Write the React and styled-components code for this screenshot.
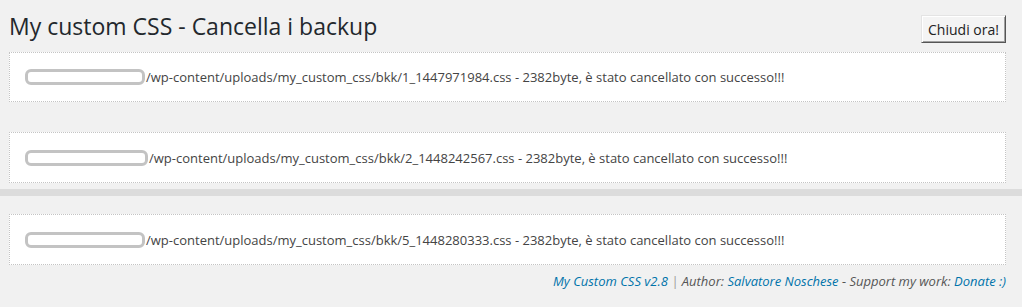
import React from "react";
import styled, { createGlobalStyle } from "styled-components";

const Global = createGlobalStyle`
  html, body { margin: 0; padding: 0; background: #f1f1f1; }
  body { font-family: "Open Sans", "Noto Sans", sans-serif; color: #444; font-size: 13px; }
`;

const Page = styled.div`
  width: 1022px;
  padding-top: 12px;
`;

const Header = styled.div`
  display: flex;
  justify-content: space-between;
  align-items: flex-start;
  margin: 0 16px 0 9px;
  height: 40px;
`;

const Title = styled.h1`
  margin: 0;
  font-size: 23px;
  font-weight: 400;
  line-height: 29px;
  color: #23282d;
`;

const CloseButton = styled.button`
  margin-top: 3px;
  width: 85px;
  height: 28px;
  padding: 0;
  font-family: "Open Sans", "Noto Sans", sans-serif;
  font-size: 14px;
  color: #222;
  background: #f4f4f4;
  border: 1px solid;
  border-color: #e4e4e4 #555 #555 #e4e4e4;
  box-shadow: inset 1px 1px 0 #fff, inset -1px -1px 0 #a0a0a0;
  cursor: pointer;
`;

const Notice = styled.div`
  margin: ${(p) => p.$mt}px 16px 0 9px;
  height: ${(p) => p.$h}px;
  box-sizing: border-box;
  background: #fff;
  border: 1px dotted #c4c4c4;
  display: flex;
  align-items: center;
  padding: 0 15px;
  font-size: 13px;
  color: #444;
`;

const Redacted = styled.span`
  display: inline-block;
  width: ${(p) => p.$w}px;
  height: 10px;
  border: 3px solid #c3c3c3;
  border-radius: 6px;
  background: #fff;
  margin-right: 1px;
  flex-shrink: 0;
`;

const Band = styled.div`
  margin-top: 6px;
  height: 7px;
  background: #dcdcdc;
`;

const Footer = styled.p`
  margin: 7px 16px 0 9px;
  text-align: right;
  font-style: italic;
  font-size: 13px;
  line-height: 18px;
  color: #555;
`;

const Link = styled.a`
  color: #0073aa;
  text-decoration: none;
`;

const Sep = styled.span`
  color: #999;
`;

const rows = [
  { file: "1_1447971984", mt: 0, h: 50, w: 114 },
  { file: "2_1448242567", mt: 30, h: 51, w: 117 },
];

export default function App() {
  return (
    <>
      <Global />
      <Page>
        <Header>
          <Title>My custom CSS - Cancella i backup</Title>
          <CloseButton>Chiudi ora!</CloseButton>
        </Header>
        {rows.map((r) => (
          <Notice key={r.file} $mt={r.mt} $h={r.h}>
            <Redacted $w={r.w} />
            /wp-content/uploads/my_custom_css/bkk/{r.file}.css - 2382byte, è stato cancellato con successo!!!
          </Notice>
        ))}
        <Band />
        <Notice $mt={18} $h={51}>
          <Redacted $w={114} />
          /wp-content/uploads/my_custom_css/bkk/5_1448280333.css - 2382byte, è stato cancellato con successo!!!
        </Notice>
        <Footer>
          <Link href="#">My Custom CSS v2.8</Link> <Sep>|</Sep> Author:{" "}
          <Link href="#">Salvatore Noschese</Link> - Support my work:{" "}
          <Link href="#">Donate :)</Link>
        </Footer>
      </Page>
    </>
  );
}
